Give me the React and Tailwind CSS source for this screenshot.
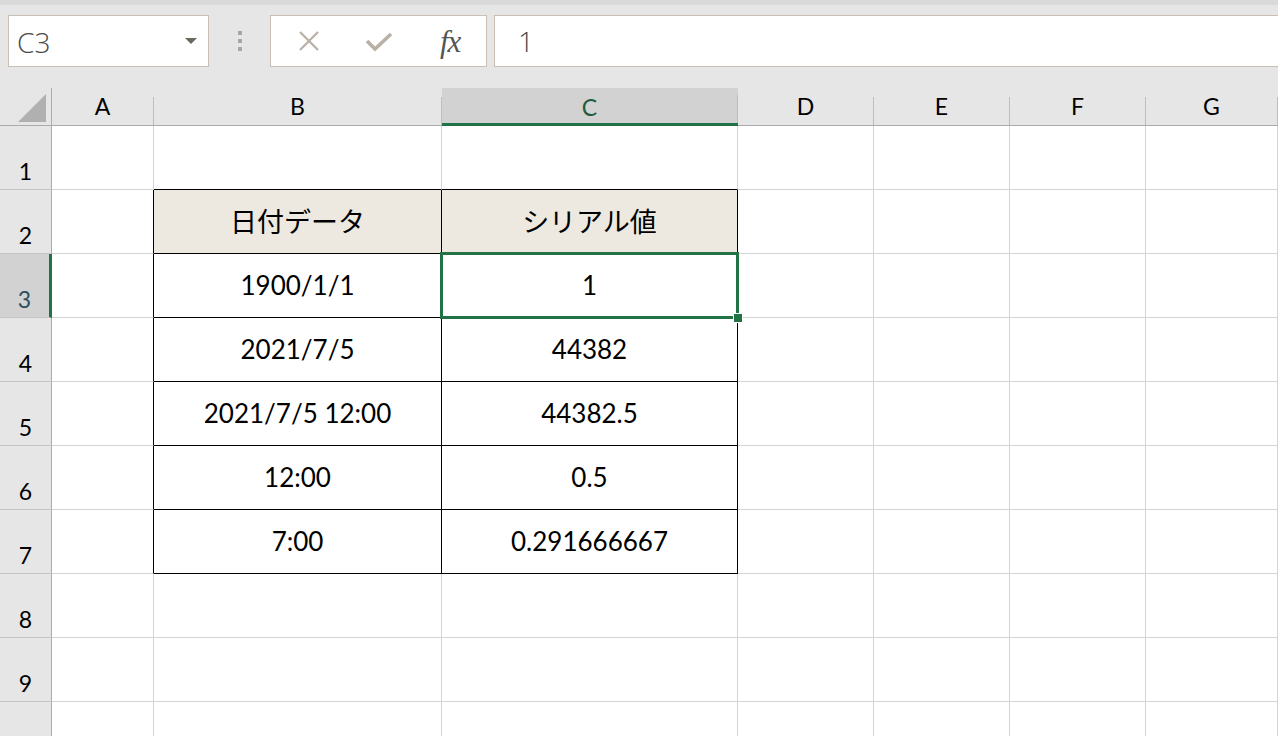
import React from "react";

const COLS = ["A", "B", "C", "D", "E", "F", "G"];

const DATA = {
  2: ["日付データ", "シリアル値"],
  3: ["1900/1/1", "1"],
  4: ["2021/7/5", "44382"],
  5: ["2021/7/5 12:00", "44382.5"],
  6: ["12:00", "0.5"],
  7: ["7:00", "0.291666667"],
};

const CELL_FONT = { fontFamily: "Lato, 'Noto Sans CJK JP', sans-serif" };

function XIcon() {
  return (
    <svg width="24" height="24" viewBox="0 0 24 24">
      <path d="M3 3 L21 21 M21 3 L3 21" stroke="#b9b0a6" strokeWidth="2.2" fill="none" />
    </svg>
  );
}

function CheckIcon() {
  return (
    <svg width="28" height="22" viewBox="0 0 28 22">
      <path d="M2 11 L10 19 L26 4" stroke="#b9b0a6" strokeWidth="3.6" fill="none" />
    </svg>
  );
}

function Toolbar() {
  return (
    <div className="h-[88px] bg-[#e6e6e6] border-t-[5px] border-[#d9d9d9] flex items-start pt-[10px] pl-[8px]">
      {/* name box */}
      <div className="w-[201px] h-[52px] bg-white border border-[#c9bfb4] flex items-center justify-between pl-[8px] pr-[11px]">
        <span className="text-[28px] text-[#4a4a4a] font-['Open_Sans',sans-serif] font-light leading-none pt-[2px]">C3</span>
        <span className="w-0 h-0 border-l-[6px] border-r-[6px] border-t-[6px] border-l-transparent border-r-transparent border-t-[#6e675e]" />
      </div>
      {/* dots */}
      <div className="w-[61px] h-[52px] flex flex-col items-center justify-center gap-[4px]">
        <span className="w-[4px] h-[4px] bg-[#a6a6a6]" />
        <span className="w-[4px] h-[4px] bg-[#a6a6a6]" />
        <span className="w-[4px] h-[4px] bg-[#a6a6a6]" />
      </div>
      {/* formula buttons */}
      <div className="w-[217px] h-[52px] bg-white border border-[#c9bfb4] flex items-center">
        <div className="w-[72px] flex justify-center pl-[4px]">
          <XIcon />
        </div>
        <div className="w-[72px] flex justify-center">
          <CheckIcon />
        </div>
        <div className="w-[72px] flex justify-center">
          <span className="text-[31px] italic text-[#555] font-['Liberation_Serif',serif] leading-none tracking-[-1px]">fx</span>
        </div>
      </div>
      {/* formula input */}
      <div className="flex-1 ml-[7px] h-[52px] bg-white border border-[#c9bfb4] border-r-0 flex items-center pl-[23px]">
        <span className="text-[28px] text-[#4a4a4a] font-['Open_Sans',sans-serif] font-light leading-none">1</span>
      </div>
    </div>
  );
}

function ColHeader({ label }) {
  const sel = label === "C";
  return (
    <div
      className={
        sel
          ? "flex bg-[#d2d2d2] border-b-[3px] border-b-[#217346]"
          : "flex bg-[#e6e6e6] border-b border-b-[#ababab]"
      }
    >
      <span
        className={
          sel
            ? "flex-1 flex items-center justify-center text-[23px] text-[#1f5c3c] pt-[3px]"
            : "flex-1 flex items-center justify-center text-[23px] text-black"
        }
        style={CELL_FONT}
      >
        {label}
      </span>
      <span className="w-px h-[28px] self-end bg-[#bdbdbd]" />
    </div>
  );
}

function RowHeader({ n, label }) {
  const sel = n === 3;
  return (
    <div
      className={
        sel
          ? "flex items-end justify-center pb-[6px] bg-[#d2d2d2] border-r-[3px] border-r-[#217346] border-b border-b-[#c4c4c4] text-[23px] text-[#2b4f5f] leading-none"
          : "flex items-end justify-center pb-[6px] bg-[#e6e6e6] border-r border-r-[#ababab] border-b border-b-[#c4c4c4] text-[23px] text-black leading-none"
      }
      style={CELL_FONT}
    >
      {label}
    </div>
  );
}

function Cell({ r, c }) {
  const inTable = r >= 2 && r <= 7 && (c === 1 || c === 2);
  const rightBlack = inTable || (c === 0 && r >= 2 && r <= 7);
  const bottomBlack = inTable || (r === 1 && (c === 1 || c === 2));
  const headerRow = r === 2 && inTable;
  const text = inTable ? DATA[r][c - 1] : "";
  const selected = r === 3 && c === 2;

  return (
    <div
      className={[
        "relative flex items-center justify-center border-r border-b text-black",
        rightBlack ? "border-r-black" : "border-r-[#d4d4d4]",
        bottomBlack ? "border-b-black" : "border-b-[#d4d4d4]",
        headerRow ? "bg-[#ede9e0] text-[27px] pt-[2px]" : "bg-white text-[26px]",
      ].join(" ")}
      style={CELL_FONT}
    >
      {text}
      {selected && (
        <>
          <div className="absolute z-10 top-[-2px] left-[-2px] right-[-2px] bottom-[-2px] border-[3px] border-[#217346]" />
          <div className="absolute z-20 right-[-6px] bottom-[-6px] w-[10px] h-[10px] bg-[#217346] border border-white" />
        </>
      )}
    </div>
  );
}

export default function App() {
  const rows = [1, 2, 3, 4, 5, 6, 7, 8, 9, 10];
  return (
    <div className="w-[1278px] h-[736px] overflow-hidden bg-white select-none">
      <Toolbar />
      <div className="grid grid-cols-[52px_102px_288px_296px_136px_136px_136px_1fr] grid-rows-[38px_repeat(10,64px)]">
        {/* corner */}
        <div className="flex items-end justify-end bg-[#e6e6e6] border-r border-r-[#ababab] border-b border-b-[#ababab] pr-[5px] pb-[3px]">
          <svg width="28" height="28" viewBox="0 0 28 28">
            <polygon points="28,0 28,28 0,28" fill="#b0b0b0" />
          </svg>
        </div>
        {COLS.map((c) => (
          <ColHeader key={c} label={c} />
        ))}
        {rows.map((r) => (
          <React.Fragment key={r}>
            <RowHeader n={r} label={r < 10 ? r : ""} />
            {COLS.map((_, ci) => (
              <Cell key={ci} r={r} c={ci} />
            ))}
          </React.Fragment>
        ))}
      </div>
    </div>
  );
}
